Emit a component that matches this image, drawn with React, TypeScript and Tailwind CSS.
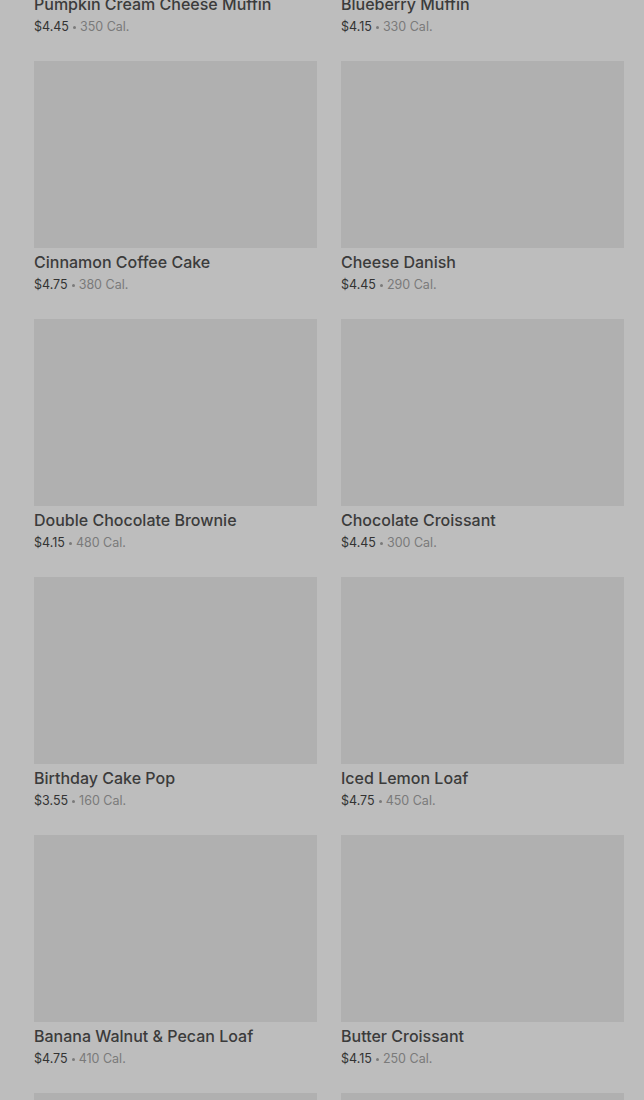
const items = [
  { name: "Pumpkin Cream Cheese Muffin", price: "$4.45", cal: "350 Cal." },
  { name: "Blueberry Muffin", price: "$4.15", cal: "330 Cal." },
  { name: "Cinnamon Coffee Cake", price: "$4.75", cal: "380 Cal." },
  { name: "Cheese Danish", price: "$4.45", cal: "290 Cal." },
  { name: "Double Chocolate Brownie", price: "$4.15", cal: "480 Cal." },
  { name: "Chocolate Croissant", price: "$4.45", cal: "300 Cal." },
  { name: "Birthday Cake Pop", price: "$3.55", cal: "160 Cal." },
  { name: "Iced Lemon Loaf", price: "$4.75", cal: "450 Cal." },
  { name: "Banana Walnut & Pecan Loaf", price: "$4.75", cal: "410 Cal." },
  { name: "Butter Croissant", price: "$4.15", cal: "250 Cal." },
  { name: "Plain Bagel", price: "$2.95", cal: "280 Cal." },
  { name: "Everything Bagel", price: "$2.95", cal: "290 Cal." },
];

export default function App() {
  return (
    <div
      className="h-[1100px] w-full overflow-hidden bg-[#bdbdbd]"
      style={{ fontFamily: "Inter, Roboto, sans-serif" }}
    >
      <div className="mt-[-197px] grid grid-cols-2 gap-x-6 gap-y-6 pl-[34px] pr-5">
        {items.map((item) => (
          <div key={item.name} className="flex flex-col">
            <div className="h-[187px] w-full bg-[#b0b0b0]" />
            <p className="mt-[3px] h-[22px] text-base leading-[22px] font-medium text-[#3b3b3b]">
              {item.name}
            </p>
            <p className="mt-0.5 h-5 text-[12.5px] leading-5 text-[#7a7a7a]">
              <span className="text-[#333333]">{item.price}</span>
              <span className="mx-[4px] inline-block h-[3px] w-[3px] rounded-full bg-[#7a7a7a] align-middle" />
              {item.cal}
            </p>
          </div>
        ))}
      </div>
    </div>
  );
}
